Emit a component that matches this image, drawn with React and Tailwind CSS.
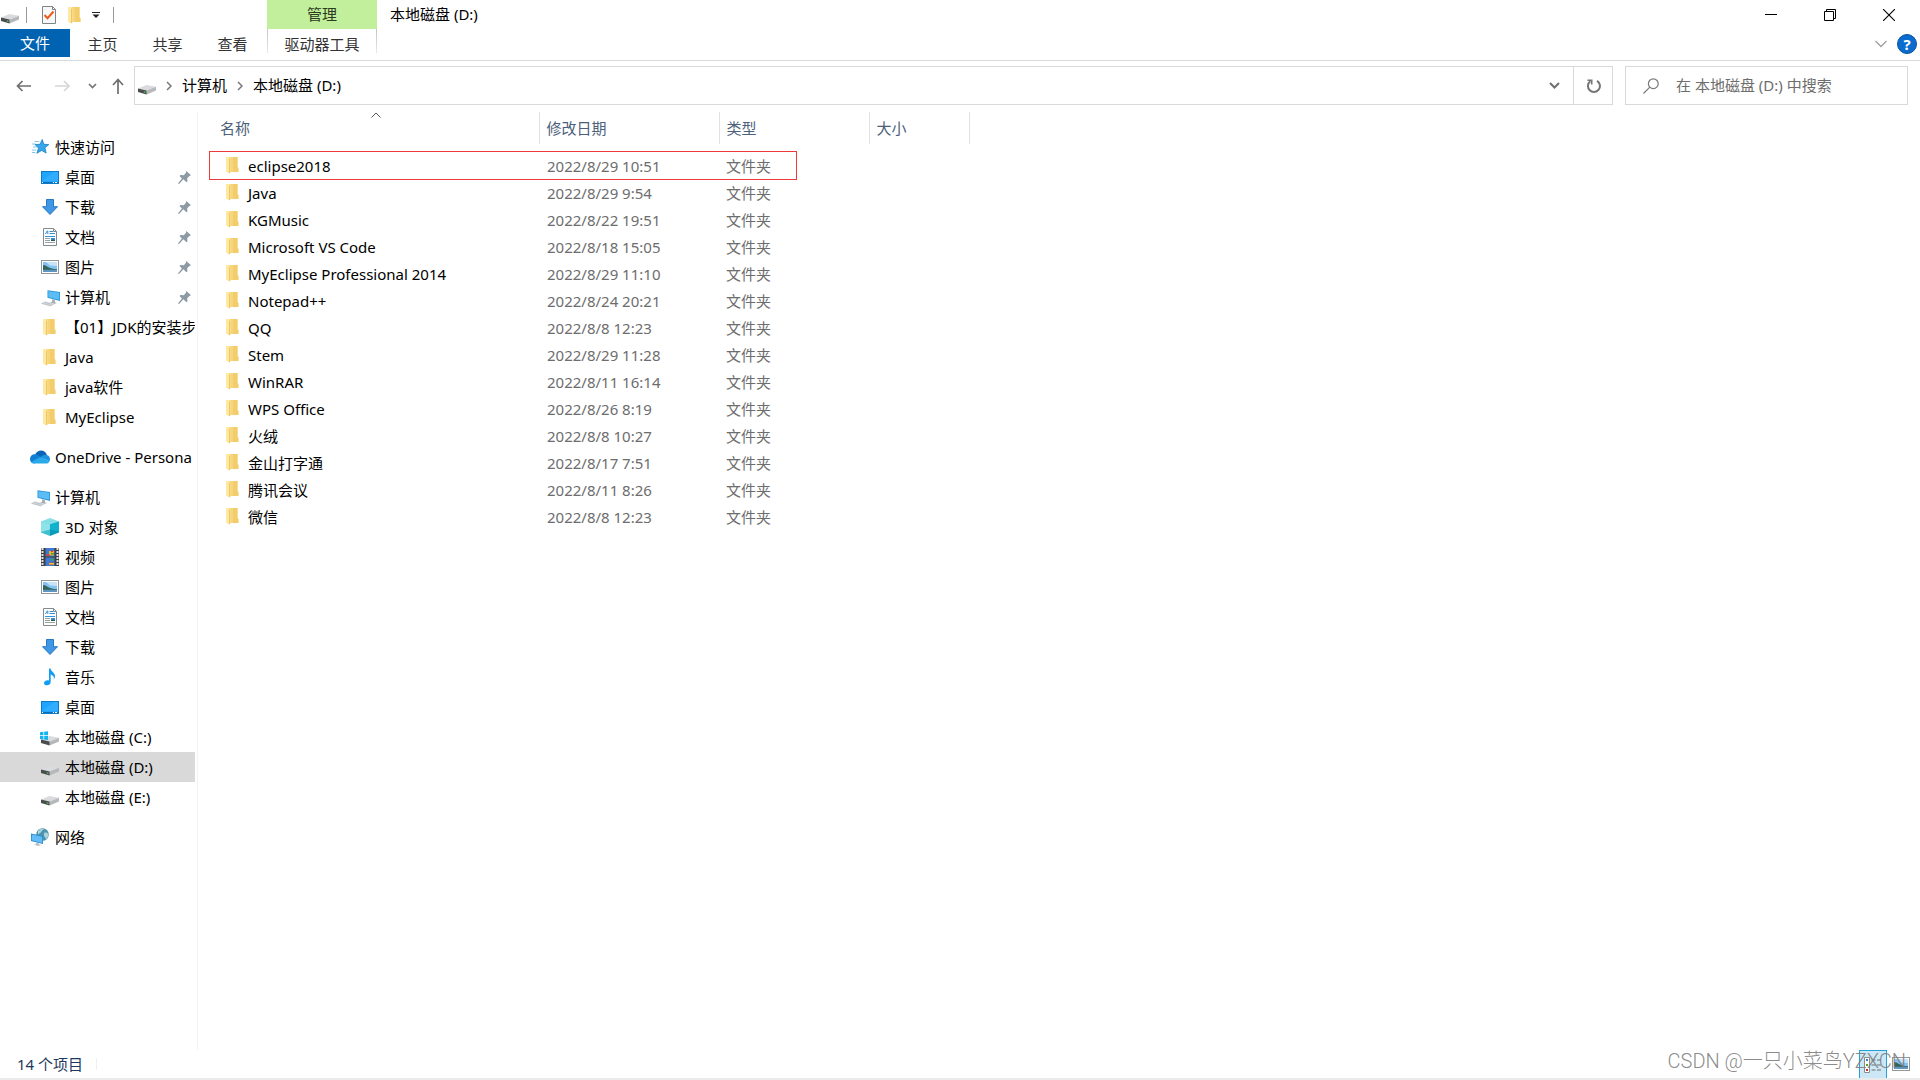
import React, { useState } from 'react';

const FolderIcon = () => (
  <svg width="18" height="18" viewBox="0 0 18 18" className="shrink-0">
    <path d="M5 1h8.5v10.5l.9.3V16H5z" fill="#f6d57c" />
    <path d="M9 1h4.5v10.5l.9.3V16H9z" fill="#f3cd6c" />
    <path d="M2 1h3.6l1 1v14L5 17.6 2 15.4z" fill="#ffe8a0" />
    <path d="M6.2 2v14.2L5 17.6V3z" fill="#eec766" />
  </svg>
);

const DriveIcon = () => (
  <svg width="18" height="18" viewBox="0 0 18 18" className="shrink-0">
    <path d="M0 11.5 8.500 8 18 9.800 8.600 13.600z" fill="#dadbde" />
    <path d="M8.600 13.600 18 9.800v3.800l-9.400 4z" fill="#b7b8bc" />
    <path d="M0 11.500l8.600 2.100v4L0 15z" fill="#4b4c4e" />
    <path d="M5.800 14.200l1.600.4v1.300l-1.600-.4z" fill="#3fd04c" />
  </svg>
);

const SystemDriveIcon = () => (
  <svg width="18" height="18" viewBox="0 0 18 18" className="shrink-0 overflow-visible">
    <path d="M0 11.5 8.5 8l9.5 1.8-9.4 3.7z" fill="#dadbde" />
    <path d="M8.6 13.5 18 9.8v3.6l-9.4 4z" fill="#b7b8bc" />
    <path d="M0 11.5l8.6 2v3.9L0 15z" fill="#4b4c4e" />
    <path d="M-1 4.3l3.4-.5v3.4H-1zM3.2 3.7 7 3.2v4H3.2zM-1 8h3.4v3.4L-1 11zM3.2 8H7v4l-3.8-.5z" fill="#12b4ef" />
  </svg>
);

const DesktopIcon = () => (
  <svg width="18" height="18" viewBox="0 0 18 18" className="shrink-0">
    <rect x="0.5" y="3.5" width="17" height="12" fill="#1fa5ff" stroke="#0c7cc9" />
    <path d="M1 13 13 4h4v9z" fill="#31adff" />
    <path d="M1 14h16v1H1z" fill="#0a6eb5" />
    <path d="M1 14h1v1H1zM12 14h1v1h-1zM14 14h2v1h-2z" fill="#fff" />
  </svg>
);

const DownloadIcon = () => (
  <svg width="18" height="18" viewBox="0 0 18 18" className="shrink-0">
    <path d="M5.5 1.5h7v7.2h4L9 16.5 1.5 8.7h4z" fill="#3f97e6" stroke="#2878c0" />
  </svg>
);

const DocumentIcon = () => (
  <svg width="18" height="18" viewBox="0 0 18 18" className="shrink-0">
    <path d="M2.5.5h10l3 3v14h-13z" fill="#fff" stroke="#848b90" />
    <path d="M12.5.5v3h3" fill="none" stroke="#848b90" />
    <path d="M4.500 6 6.200 3h.6v3" fill="none" stroke="#1d86cc" strokeWidth="0.900" />
    <path d="M8.5 3.5H12M8.5 5.5H14M4 8.500h10" stroke="#2b96dc" />
    <path d="M4 10.5h5M4 12.5h5M4 14.500h10" stroke="#9aa2a6" />
    <path d="M10 10h4v3h-4z" fill="#3b8dc8" />
    <path d="M10 12.200l2-.8 2 .8v.8h-4z" fill="#255c57" />
  </svg>
);

const PictureIcon = () => (
  <svg width="18" height="18" viewBox="0 0 18 18" className="shrink-0">
    <rect x="0.5" y="2.5" width="17" height="13" fill="#fff" stroke="#92979b" />
    <path d="M2 4h14v10H2z" fill="#83c2f2" />
    <path d="M5 4h11v4L9 7.500z" fill="#c6e3f8" />
    <path d="M2 7c2 0 4 1.400 6 2.600 2.600 1.200 5 1.600 8 1.600V12H2z" fill="#34655c" />
    <path d="M2 11.800h14V14H2z" fill="#5f97c2" />
  </svg>
);

const ComputerIcon = () => (
  <svg width="18" height="18" viewBox="0 0 18 18" className="shrink-0 overflow-visible">
    <path d="M6.500 2.200 19 4v9L6.500 9.700z" fill="#2a96d8" />
    <path d="M7.300 3.200 18.200 4.800v7L7.300 9z" fill="#5cbdf5" />
    <path d="M11 11.300l3 .8v2.100l2 .8-3 1-4-1.400 2-.8z" fill="#a9b1b7" />
    <path d="M-.5 15.500 4 13.300l10 2.700-4.500 2.400z" fill="#d3d8dc" />
    <path d="M1 15.400l9 2.200M3.500 14.400l8 2.100" stroke="#b2b9be" strokeWidth="0.600" />
  </svg>
);

const StarIcon = () => (
  <svg width="18" height="18" viewBox="0 0 18 18" className="shrink-0">
    <path d="M11.200 1.500l1.600 4.800 5 .3-3.900 3.200 1.200 5.300-4.400-2.700-4.800 2.900 1.600-5.300L4 6.500l5-.2z" fill="#38a7ea" stroke="#1880c4" strokeWidth="0.800" />
    <path d="M3.500 3.500h4.700M1 6h3.500M2 9h4M1 12h4M1 14.500h3.500" stroke="#64b6e8" strokeWidth="0.800" />
  </svg>
);

const OneDriveIcon = () => (
  <svg width="18" height="18" viewBox="0 0 18 18" className="shrink-0 overflow-visible">
    <path d="M4 7C5 4 7.500 2.500 10 2.500c3 0 5 1.800 5.800 4.300L9 12z" fill="#0a64b8" />
    <path d="M-1 11c0-3 2.200-4.700 4.600-4.700 1.600 0 2.700.5 3.900 1.300L14 11.500 3 15.500C.4 15.200-1 13.500-1 11z" fill="#1180d4" />
    <path d="M9.500 9.300c1.300-1.800 3.200-2.700 5.300-2.600 2.500.1 4.200 2 4.200 4.400 0 .8-.2 1.500-.5 2.100z" fill="#1a92e0" />
    <path d="M.2 14 8 9.700c1-.6 2-.5 3 0l7.500 3.500c-.6 1.500-1.700 2.300-3.500 2.300H3.500c-1.500 0-2.500-.5-3.300-1.500z" fill="#29a8ea" />
  </svg>
);

const CubeIcon = () => (
  <svg width="18" height="18" viewBox="0 0 18 18" className="shrink-0">
    <path d="M9 0l9 3.500L9 6.500 0 3.500z" fill="#82dfe4" />
    <path d="M0 3.500l9 3V18l-9-3.500z" fill="#3fc0d0" />
    <path d="M18 3.500l-9 3V18l9-3.500z" fill="#0c9ab9" />
    <path d="M0 3.500l9 3v5L0 14z" fill="#8fe3e8" />
    <path d="M18 3.500l-9 3v5l9 2z" fill="#12b1ce" />
  </svg>
);

const VideoIcon = () => (
  <svg width="18" height="18" viewBox="0 0 18 18" className="shrink-0">
    <path d="M0 0h18v18H0z" fill="#3e3f41" />
    <path d="M1.500 0v18M16.500 0v18" stroke="#e4e4e4" strokeWidth="2" strokeDasharray="2 1" />
    <path d="M4.500 0h9v8.500h-9zM4.500 9.500h9V18h-9z" fill="#3f79d8" />
    <path d="M8 3h5v4.500H8z" fill="#e8b52d" />
    <path d="M5 6.500h4V8H5zM10 2.500h2V4h-2zM8 14.500h4V17H8z" fill="#d6432f" />
    <path d="M9.500 10.500h3v2h-3zM10 5h3v1.500h-3z" fill="#43a047" />
    <path d="M8 15h5v1.500H8z" fill="#f1c232" />
  </svg>
);

const MusicIcon = () => (
  <svg width="18" height="18" viewBox="0 0 18 18" className="shrink-0">
    <path d="M8 .5h1.500c.3 3 4.500 4 4.500 7.500 0 1.600-.5 2.700-1.200 3.500.6-2.800-.8-4.300-3.100-4.900v7.200c0 2-1.500 3.500-3.600 3.500C4.300 17.300 3 16.500 3 15c0-2 2.500-3.200 5-2.600z" fill="#119df3" />
  </svg>
);

const NetworkIcon = () => (
  <svg width="18" height="18" viewBox="0 0 18 18" className="shrink-0">
    <circle cx="11.500" cy="6.500" r="6.300" fill="#4d93ae" />
    <path d="M7 3c2-2.500 5-2.500 6-2-1 1.500-2 1-2.500 2.500S8 5 7 7zM13 5c2-1 3.500 0 4.500 1 0 2-1 4-2.500 5-1-1-.5-2-2-3z" fill="#a9d4dc" />
    <path d="M0 5.500 12 8v8L0 13z" fill="#2789cc" />
    <path d="M.8 6.500 11.200 8.700v6.200L.8 12.300z" fill="#62bdf7" />
    <path d="M5 14.400l3 .8v1.300l2.500.6-3 .9-4.500-1.300 2-.6z" fill="#b9c0c5" />
  </svg>
);

const PinIcon = () => (
  <svg width="13" height="13" viewBox="0 0 13 13" className="ml-auto mr-1 shrink-0">
    <path d="M8.300 0 13 4.200l-1.600.8-2.200 2.200.2 3.300-1 .8-3-3L1 13 0 12.600l3.900-5L1.500 5l1-.9 3.300.1 2-2.200z" fill="#8d9aa3" />
  </svg>
);

const Chevron = ({ d = 'M1 1l4 4-4 4', w = 6, h = 10, color = '#767676', sw = 1.5 }) => (
  <svg width={w} height={h} viewBox={`0 0 ${w} ${h}`} className="shrink-0">
    <path d={d} fill="none" stroke={color} strokeWidth={sw} />
  </svg>
);

const groups = [
  {
    label: '快速访问',
    icon: StarIcon,
    items: [
      { label: '桌面', icon: DesktopIcon, pinned: true },
      { label: '下载', icon: DownloadIcon, pinned: true },
      { label: '文档', icon: DocumentIcon, pinned: true },
      { label: '图片', icon: PictureIcon, pinned: true },
      { label: '计算机', icon: ComputerIcon, pinned: true },
      { label: '【01】JDK的安装步', icon: FolderIcon },
      { label: 'Java', icon: FolderIcon },
      { label: 'java软件', icon: FolderIcon },
      { label: 'MyEclipse', icon: FolderIcon },
    ],
  },
  { label: 'OneDrive - Persona', icon: OneDriveIcon, items: [] },
  {
    label: '计算机',
    icon: ComputerIcon,
    items: [
      { label: '3D 对象', icon: CubeIcon },
      { label: '视频', icon: VideoIcon },
      { label: '图片', icon: PictureIcon },
      { label: '文档', icon: DocumentIcon },
      { label: '下载', icon: DownloadIcon },
      { label: '音乐', icon: MusicIcon },
      { label: '桌面', icon: DesktopIcon },
      { label: '本地磁盘 (C:)', icon: SystemDriveIcon },
      { label: '本地磁盘 (D:)', icon: DriveIcon, selected: true },
      { label: '本地磁盘 (E:)', icon: DriveIcon },
    ],
  },
  { label: '网络', icon: NetworkIcon, items: [] },
];

const files = [
  ['eclipse2018', '2022/8/29 10:51'],
  ['Java', '2022/8/29 9:54'],
  ['KGMusic', '2022/8/22 19:51'],
  ['Microsoft VS Code', '2022/8/18 15:05'],
  ['MyEclipse Professional 2014', '2022/8/29 11:10'],
  ['Notepad++', '2022/8/24 20:21'],
  ['QQ', '2022/8/8 12:23'],
  ['Stem', '2022/8/29 11:28'],
  ['WinRAR', '2022/8/11 16:14'],
  ['WPS Office', '2022/8/26 8:19'],
  ['火绒', '2022/8/8 10:27'],
  ['金山打字通', '2022/8/17 7:51'],
  ['腾讯会议', '2022/8/11 8:26'],
  ['微信', '2022/8/8 12:23'],
];

function TitleBar() {
  return (
    <div className="flex h-[29px] items-stretch">
      <div className="flex w-[267px] items-center pl-px">
        <DriveIcon />
        <span className="ml-[7px] h-4 w-px bg-[#9a9a9a]" />
        <button aria-label="属性" className="ml-[15px]">
          <svg width="14" height="18" viewBox="0 0 14 18">
            <path d="M.5.5h10l3 3v14H.5z" fill="#f5f7f8" stroke="#7e8487" />
            <path d="M10.500.5v3h3" fill="none" stroke="#7e8487" />
            <path d="M2.500 9l3 3.200L11.500 5.500" fill="none" stroke="#ee5a1c" strokeWidth="2" />
          </svg>
        </button>
        <button aria-label="新建文件夹" className="ml-[10px]"><FolderIcon /></button>
        <button aria-label="自定义快速访问工具栏" className="ml-2">
          <svg width="8" height="6" viewBox="0 0 8 6">
            <path d="M0 0h8v1H0zM0.500 2.500h7L4 6z" fill="#222" />
          </svg>
        </button>
        <span className="ml-[13px] h-4 w-px bg-[#9a9a9a]" />
      </div>
      <div className="flex w-[110px] items-center justify-center bg-[#c2ef9b] pb-[2px] text-[#2c3a1e]">管理</div>
      <h1 className="flex items-center pb-[2px] pl-[13px]">本地磁盘 (D:)</h1>
      <div className="ml-auto flex pr-[2px]">
        <button aria-label="最小化" className="flex w-[59px] items-center justify-center">
          <svg width="12" height="12" viewBox="0 0 12 12"><path d="M0 5h12v1H0z" fill="#000" /></svg>
        </button>
        <button aria-label="向下还原" className="flex w-[59px] items-center justify-center">
          <svg width="12" height="12" viewBox="0 0 12 12" fill="none" stroke="#000">
            <path d="M.5 2.500h9v9h-9zM2.500 2.500v-2h9v9h-2" />
          </svg>
        </button>
        <button aria-label="关闭" className="flex w-[59px] items-center justify-center">
          <svg width="12" height="12" viewBox="0 0 12 12" fill="none" stroke="#000" strokeWidth="1.100">
            <path d="M0 0l12 12M12 0 0 12" />
          </svg>
        </button>
      </div>
    </div>
  );
}

function Ribbon() {
  return (
    <div className="flex h-8 items-start border-b border-[#d9dadb] text-[#333]">
      <button className="h-7 w-[70px] bg-[#0063b1] text-white">文件</button>
      <button className="h-7 w-[65px] pt-[2px]">主页</button>
      <button className="h-7 w-[65px] pt-[2px]">共享</button>
      <button className="h-7 w-[65px] pt-[2px]">查看</button>
      <div className="ml-[2px] flex w-[110px]">
        <span className="h-6 w-px bg-linear-to-b from-[#c4c4c4] to-[#e8e8e8]" />
        <button className="h-7 flex-1 whitespace-nowrap pt-[2px]">驱动器工具</button>
        <span className="h-6 w-px bg-linear-to-b from-[#c4c4c4] to-[#e8e8e8]" />
      </div>
      <div className="ml-auto flex items-center gap-[10px] pr-[3px] pt-[5px]">
        <button aria-label="展开功能区">
          <Chevron d="M.5 1l5.500 5.500L11.500 1" w={12} h={8} color="#a0a0a0" sw={1.3} />
        </button>
        <button aria-label="帮助" className="flex h-5 w-5 items-center justify-center rounded-full border border-[#0b539b] bg-[#0a6cce] font-bold leading-4 text-white">?</button>
      </div>
    </div>
  );
}

function AddressBar() {
  const [query, setQuery] = useState('');
  return (
    <div className="flex h-[51px] items-start pr-3 pt-[5px]">
      <div className="flex h-[39px] w-[134px] items-center pl-4">
        <button aria-label="返回">
          <svg width="16" height="12" viewBox="0 0 16 12" fill="none" stroke="#6f6f6f" strokeWidth="1.700">
            <path d="M15 6H1.500M6.500 1l-5 5 5 5" />
          </svg>
        </button>
        <button aria-label="前进" className="ml-[23px]">
          <svg width="16" height="12" viewBox="0 0 16 12" fill="none" stroke="#d6d6d6" strokeWidth="1.700">
            <path d="M0 6h14M9 1l5 5-5 5" />
          </svg>
        </button>
        <button aria-label="最近浏览的位置" className="ml-[17px]">
          <Chevron d="M1 1l3.500 3.500L8 1" w={9} h={6} sw={1.7} />
        </button>
        <button aria-label="上移" className="ml-[15px]">
          <svg width="12" height="16" viewBox="0 0 12 16" fill="none" stroke="#6f6f6f" strokeWidth="1.700">
            <path d="M6 16V2M1 7l5-5.500L11 7" />
          </svg>
        </button>
      </div>
      <div className="flex h-[39px] flex-1 items-center border border-[#d9d9d9] pl-[3px]">
        <DriveIcon />
        <span className="mx-[10px] flex"><Chevron /></span>
        <a href="#computer" className="pb-[2px]">计算机</a>
        <span className="mx-[10px] flex"><Chevron /></span>
        <a href="#d" className="pb-[2px]">本地磁盘 (D:)</a>
        <button aria-label="以前的位置" className="ml-auto flex h-full w-[38px] items-center justify-center border-r border-[#d9d9d9]">
          <Chevron d="M1 1l4.500 4.500L10 1" w={11} h={7} color="#6f6f6f" sw={2} />
        </button>
        <button aria-label="刷新" className="flex h-full w-[38px] items-center justify-center">
          <svg width="16" height="16" viewBox="0 0 16 16" fill="none" stroke="#767676" strokeWidth="2">
            <path d="M12 2.800A6 6 0 1 1 5.300 3.200" />
            <path d="M2.500 2.200h4.200v4.300" strokeWidth="1.600" />
          </svg>
        </button>
      </div>
      <label className="ml-3 flex h-[39px] w-[283px] items-center border border-[#d9d9d9] pl-[17px]">
        <svg width="16" height="16" viewBox="0 0 16 16" fill="none" stroke="#7a7a7a" strokeWidth="1.200">
          <circle cx="10.300" cy="5.700" r="4.900" />
          <path d="M6.800 9.200.5 15.500" />
        </svg>
        <input
          type="text"
          aria-label="搜索"
          value={query}
          onChange={(e) => setQuery(e.target.value)}
          placeholder="在 本地磁盘 (D:) 中搜索"
          className="ml-[17px] min-w-0 flex-1 pb-[2px] outline-none placeholder:text-[#6d6d6d]"
        />
      </label>
    </div>
  );
}

function Sidebar() {
  return (
    <nav className="flex w-[198px] shrink-0 flex-col gap-[10px] border-r border-[#f3f3f3] pr-[2px] pt-5">
      {groups.map((group, idx) => (
        <div key={idx}>
          <a href="#group" className="flex h-[30px] items-center gap-[6px] overflow-hidden whitespace-nowrap pl-[31px]">
            <group.icon />
            {group.label}
          </a>
          {group.items.map((item, i) => (
            <a
              key={i}
              href="#item"
              className={`flex h-[30px] items-center gap-[6px] overflow-hidden whitespace-nowrap pl-[41px] ${item.selected ? 'bg-[#d9d9d9]' : ''}`}
            >
              <item.icon />
              {item.label}
              {item.pinned && <PinIcon />}
            </a>
          ))}
        </div>
      ))}
    </nav>
  );
}

function FileList() {
  return (
    <div className="relative ml-[11px]">
      <table className="w-[760px] table-fixed text-left">
        <colgroup>
          <col className="w-[330px]" />
          <col className="w-[180px]" />
          <col className="w-[150px]" />
          <col className="w-[100px]" />
        </colgroup>
        <thead className="text-[#4c607a]">
          <tr className="h-8">
            <th className="relative border-r border-[#e2e2e2] pl-[11px] font-normal">
              名称
              <span className="absolute left-[162px] top-0">
                <Chevron d="M.5 5.500l4.500-4.500 4.500 4.500" w={10} h={6} color="#555" sw={1} />
              </span>
            </th>
            <th className="border-r border-[#e2e2e2] pl-[7px] font-normal">修改日期</th>
            <th className="border-r border-[#e2e2e2] pl-[7px] font-normal">类型</th>
            <th className="border-r border-[#e2e2e2] pl-[7px] font-normal">大小</th>
          </tr>
        </thead>
        <tbody className="text-[#6d6d6d] before:block before:h-2">
          {files.map(([name, date]) => (
            <tr key={name} className="h-[27px]">
              <td className="pl-[15px] text-black">
                <div className="flex items-start gap-[6px]">
                  <FolderIcon />
                  {name}
                </div>
              </td>
              <td className="pl-2">{date}</td>
              <td className="pl-[7px]">文件夹</td>
              <td />
            </tr>
          ))}
        </tbody>
      </table>
      <div className="pointer-events-none absolute left-0 top-[39px] h-[29px] w-[588px] border border-[#f03a3a]" />
    </div>
  );
}

function StatusBar() {
  return (
    <footer className="relative flex h-[30px] items-center border-b-2 border-[#ebebeb] pl-[17px] pr-[10px] text-[#1e395b]">
      14 个项目
      <span className="ml-[13px] h-3 w-px bg-[#f0f0f0]" />
      <button aria-label="详细信息" className="ml-auto flex h-7 w-7 items-center justify-center border border-b-0 border-[#26a0da] bg-[#cce8f7]">
        <svg width="18" height="16" viewBox="0 0 18 16">
          <path d="M.5.5h5v15h-5z" fill="#fff" stroke="#8d8d8d" />
          <path d="M2 2h2v2H2z" fill="#3b7dc4" />
          <path d="M2 7h2v2H2z" fill="#5aa02c" />
          <path d="M2 12h2v2H2z" fill="#c0392b" />
          <path d="M7.500 3h4M13 3h4M7.500 8h4M13 8h4M7.500 13h4M13 13h4" stroke="#6d6d6d" />
        </svg>
      </button>
      <button aria-label="大缩略图" className="ml-[5px]"><PictureIcon /></button>
      <span className="pointer-events-none absolute bottom-[5px] right-[14px] whitespace-nowrap font-['Roboto','Noto_Sans_CJK_SC',sans-serif] text-xl font-light leading-6 text-[#7c7c7c]/90">
        CSDN @一只小菜鸟YZXCN
      </span>
    </footer>
  );
}

export default function App() {
  return (
    <div className="flex min-h-screen flex-col bg-white font-['Noto_Sans','Noto_Sans_CJK_SC',sans-serif] text-[15px] leading-5 text-black">
      <TitleBar />
      <Ribbon />
      <AddressBar />
      <main className="flex flex-1">
        <Sidebar />
        <FileList />
      </main>
      <StatusBar />
    </div>
  );
}
